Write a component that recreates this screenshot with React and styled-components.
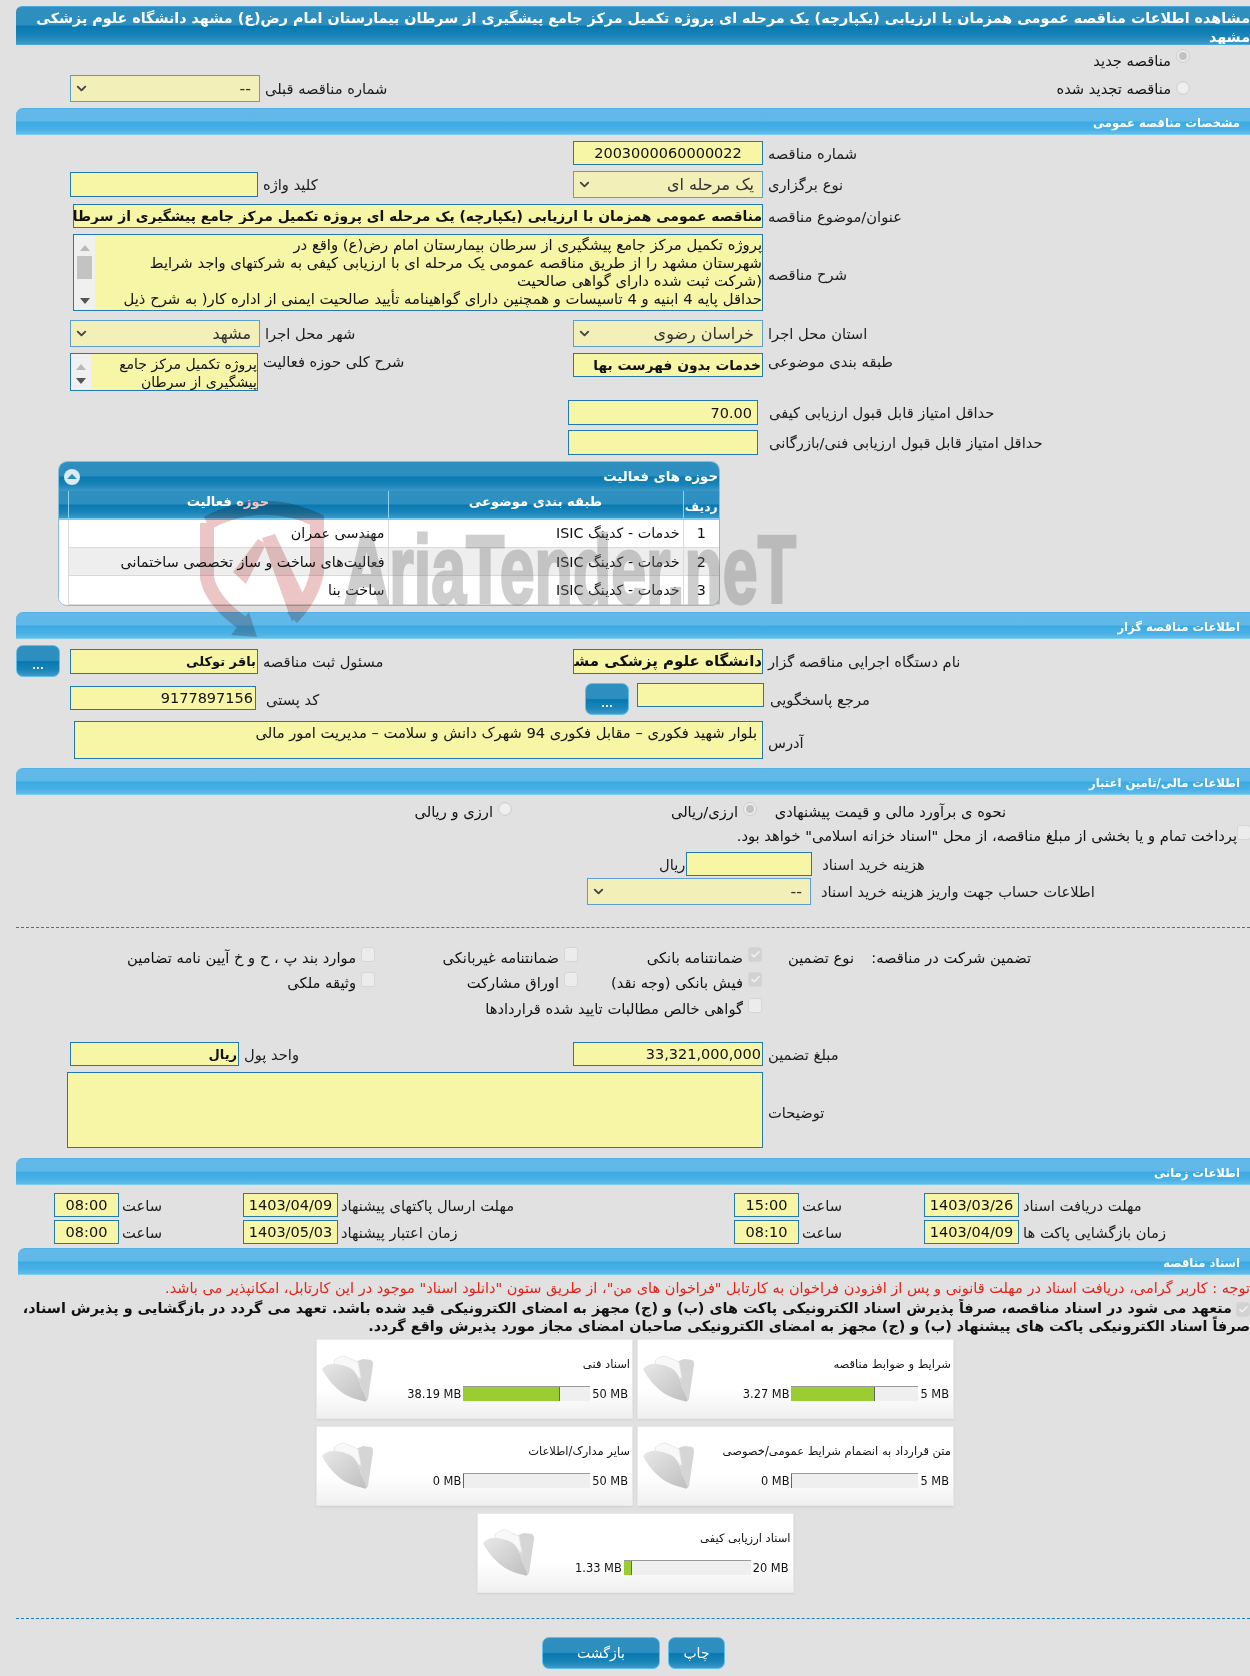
import React from 'react';
import styled, { createGlobalStyle } from 'styled-components';
import { Check, ChevronDown } from 'lucide-react';

const FONT = '"DejaVu Sans", "Liberation Sans", sans-serif';
const DARK_BAR = 'linear-gradient(#2f90c0 0%, #2d8fbf 48%, #0779b0 52%, #1b85b9 80%, #3e9ac8 100%)';
const LIGHT_BAR = 'linear-gradient(#62b9e9 0%, #60b8e8 48%, #3aaae3 52%, #4bb1e5 82%, #64bcea 100%)';

const GlobalStyle = createGlobalStyle`
  html, body { margin: 0; padding: 0; background: #e1e1e1; }
  * { box-sizing: border-box; }
`;

const Page = styled.div`
  position: relative;
  width: 1250px;
  height: 1676px;
  padding: 6px 0 0 16px;
  overflow: hidden;
  background: #e1e1e1;
  color: #111;
  font-family: ${FONT};
  font-size: 14.7px;
`;

const TitleBar = styled.div`
  height: 39px;
  padding-top: 2px;
  background: ${DARK_BAR};
  border-top: 1px solid #4aa8dc;
  border-bottom: 1px solid #4aa8dc;
  border-radius: 6px 0 0 0;
  color: #fff;
  font-weight: bold;
  font-size: 14.3px;
  line-height: 19px;
  text-align: right;
  white-space: nowrap;
  overflow: hidden;
`;

const SectionBar = styled.div`
  height: 27px;
  margin-top: ${(p) => p.$top}px;
  margin-left: ${(p) => p.$indent || 0}px;
  padding: 4px 10px 0 0;
  background: ${LIGHT_BAR};
  border-top: 1px solid #55b2e6;
  border-bottom: 1px solid #7ccdf2;
  border-radius: 7px 0 0 0;
  color: #fff;
  font-weight: bold;
  font-size: 11.6px;
  line-height: 20px;
  text-align: right;
`;

const Row = styled.div`
  display: flex;
  align-items: ${(p) => p.$align || 'center'};
  height: ${(p) => p.$h}px;
  margin-top: ${(p) => p.$top}px;
  padding-left: ${(p) => p.$left ?? 54}px;
`;

const Side = styled.div`
  display: flex;
  align-items: ${(p) => p.$align || 'center'};
  gap: ${(p) => p.$gap ?? 5}px;
  width: ${(p) => (p.$w ? `${p.$w}px` : 'auto')};
  flex-shrink: 0;
`;

const Label = styled.span`
  direction: rtl;
  white-space: nowrap;
  color: #1c1c1c;
  margin-top: ${(p) => p.$lift || 0}px;
`;

const Field = styled.input`
  width: ${(p) => p.$w}px;
  height: ${(p) => p.$h || 24}px;
  margin-top: ${(p) => p.$mt || 0}px;
  padding: 0 ${(p) => p.$pad ?? 1}px;
  flex-shrink: 0;
  background: #f7f5a6;
  border: 1px solid #2378ad;
  color: #111;
  font-family: ${FONT};
  font-size: ${(p) => p.$size || 14.5}px;
  font-weight: ${(p) => (p.$bold ? 'bold' : 'normal')};
  text-align: ${(p) => p.$align || 'right'};
  direction: rtl;
  outline: none;
`;

const SelectBox = styled.div`
  display: flex;
  align-items: center;
  justify-content: space-between;
  width: ${(p) => p.$w}px;
  height: 27px;
  padding: 0 8px 0 3px;
  flex-shrink: 0;
  background: #f2f0b8;
  border: 1px solid #5d9fca;
  color: #333;
  font-size: 16px;
  direction: ltr;
`;

const AreaBox = styled.div`
  display: flex;
  width: ${(p) => p.$w}px;
  height: ${(p) => p.$h}px;
  flex-shrink: 0;
  background: #f7f5a6;
  border: 1px solid #2378ad;
  overflow: hidden;
`;

const AreaText = styled.div`
  flex: 1;
  min-width: 0;
  padding: ${(p) => p.$pad || '1px 0 0'};
  font-size: ${(p) => p.$size || 14.8}px;
  line-height: 18px;
  text-align: right;
  direction: rtl;
  white-space: pre;
  overflow: hidden;
`;

const ScrollTrack = styled.div`
  position: relative;
  display: flex;
  flex-direction: column;
  align-items: center;
  justify-content: space-between;
  width: ${(p) => p.$w}px;
  padding: 10px 0 6px;
  flex-shrink: 0;
  background: #f0f0f0;
`;

const ArrowUp = styled.span`
  width: 0;
  height: 0;
  border: 5px solid transparent;
  border-top: 0;
  border-bottom: 6px solid #b9b9b9;
`;

const ArrowDown = styled.span`
  width: 0;
  height: 0;
  border: 5px solid transparent;
  border-bottom: 0;
  border-top: 6px solid #555;
`;

const Thumb = styled.span`
  position: absolute;
  top: 21px;
  left: 3px;
  right: 3px;
  height: 23px;
  background: #c3c3c3;
`;

const DotsButton = styled.button`
  width: 44px;
  height: 32px;
  padding: 8px 0 0;
  flex-shrink: 0;
  background: ${DARK_BAR};
  border: 1px solid #62c0ea;
  border-radius: 7px;
  color: #fff;
  font-family: ${FONT};
  font-size: 10px;
  font-weight: bold;
`;

const Panel = styled.div`
  width: 662px;
  height: 145px;
  margin: 6px 0 0 42px;
  background: #fff;
  border: 1px solid #88bde0;
  border-radius: 9px;
  overflow: hidden;
`;

const PanelHead = styled.div`
  display: flex;
  align-items: center;
  justify-content: space-between;
  height: 29px;
  padding: 0 1px 0 5px;
  background: ${DARK_BAR};
  color: #fff;
  font-weight: bold;
  font-size: 13.3px;
  direction: ltr;
`;

const Collapse = styled.span`
  display: flex;
  align-items: center;
  justify-content: center;
  width: 16px;
  height: 16px;
  border-radius: 50%;
  background: #dceaf3;
  &::before {
    content: '';
    border: 5px solid transparent;
    border-top: 0;
    border-bottom: 5px solid #2d8fbf;
  }
`;

const Grid = styled.table`
  width: 660px;
  table-layout: fixed;
  border-collapse: collapse;
  direction: rtl;
  font-size: 14.3px;
`;

const HeadCell = styled.th`
  width: ${(p) => p.$w}px;
  height: 28px;
  padding: ${(p) => (p.$low ? '4px 0 0' : '0 0 6px')};
  background: ${DARK_BAR};
  border-left: 1px solid #8ed0ee;
  border-bottom: 2px solid #7ccdf2;
  color: #fff;
  font-size: ${(p) => (p.$low ? 12.4 : 13.1)}px;
  white-space: nowrap;
  &:last-child { border-left: 0; }
`;

const BodyRow = styled.tr`
  background: ${(p) => (p.$alt ? '#eeeeee' : '#fff')};
`;

const BodyCell = styled.td`
  height: 28.4px;
  padding: 0 3px;
  border-left: 1px solid #d9d9d9;
  border-bottom: 1px solid #d9d9d9;
  text-align: ${(p) => (p.$center ? 'center' : 'right')};
  white-space: nowrap;
  &:last-child { border-left: 0; background: #fff; border-bottom: 0; }
`;

const OptionRow = styled.div`
  display: grid;
  grid-template-columns: ${(p) => p.$cols};
  align-items: center;
  height: ${(p) => p.$h || 22}px;
  margin-top: ${(p) => p.$top || 0}px;
  padding-top: ${(p) => p.$pt || 0}px;
  padding-right: ${(p) => p.$right}px;
  direction: rtl;
  white-space: nowrap;
`;

const Option = styled.label`
  display: inline-flex;
  align-items: center;
  gap: ${(p) => p.$gap ?? 5}px;
`;

const RadioDot = styled.span`
  display: inline-flex;
  align-items: center;
  justify-content: center;
  width: 14px;
  height: 14px;
  margin-top: ${(p) => p.$mt ?? -5}px;
  flex-shrink: 0;
  border-radius: 50%;
  background: #efefef;
  border: 1px solid #cfcfcf;
  box-shadow: inset 0 0 0 1px #e6e6e6;
  &::after {
    content: '';
    width: 8px;
    height: 8px;
    border-radius: 50%;
    background: ${(p) => (p.$on ? '#c2c2c2' : 'transparent')};
  }
`;

const Tick = styled.span`
  display: inline-flex;
  align-items: center;
  justify-content: center;
  width: 14px;
  height: 15px;
  margin-top: -6px;
  flex-shrink: 0;
  border-radius: 3px;
  background: ${(p) => (p.$on ? '#d2d2d2' : '#ececec')};
  border: 1px solid #d6d6d6;
  vertical-align: middle;
`;

const Dashed = styled.div`
  margin-top: ${(p) => p.$top}px;
  border-top: 1px dashed #1f7fb4;
`;

const Notice = styled.div`
  height: 20px;
  margin-top: 3px;
  color: #e2231a;
  font-size: 14.5px;
  line-height: 20px;
  text-align: right;
  direction: rtl;
  white-space: nowrap;
`;

const Pledge = styled.div`
  height: 36px;
  margin-top: 1px;
  color: #111;
  font-weight: bold;
  font-size: 14.35px;
  line-height: 18px;
  text-align: right;
  direction: rtl;
  white-space: nowrap;
  overflow: hidden;
`;

const Cards = styled.div`
  display: flex;
  flex-flow: row-reverse wrap;
  justify-content: center;
  gap: 7px 4px;
  width: 638px;
  margin: 4px 0 0 300px;
`;

const Card = styled.div`
  position: relative;
  display: flex;
  justify-content: space-between;
  width: 317px;
  height: 80px;
  padding: 15px 2px 0 4px;
  background: linear-gradient(#ffffff 0%, #ffffff 62%, #f0f0f0 100%);
  border: 1px solid #e9e9e9;
  box-shadow: 0 1px 2px #cfcfcf;
`;

const CardBody = styled.div`
  display: flex;
  flex-direction: column;
  align-items: flex-end;
  gap: 13px;
`;

const CardTitle = styled.div`
  direction: rtl;
  height: 18px;
  font-size: 11.5px;
  line-height: 18px;
  white-space: nowrap;
`;

const Usage = styled.div`
  display: flex;
  align-items: center;
  gap: 2px;
  font-size: 11.4px;
  padding-right: 2px;
`;

const Meter = styled.div`
  width: 127px;
  height: 15px;
  background: #efefef;
  border-top: 1px solid #9a9a9a;
`;

const MeterFill = styled.div`
  height: 14px;
  background: #9acd32;
  border-right: 1px solid #666;
`;

const Actions = styled.div`
  display: flex;
  gap: 8px;
  margin: 18px 0 0 526px;
`;

const ActionButton = styled.button`
  width: ${(p) => p.$w}px;
  height: 32px;
  background: ${DARK_BAR};
  border: 1px solid #62c0ea;
  border-radius: 7px;
  color: #fff;
  font-family: ${FONT};
  font-size: 14px;
`;

const Watermark = styled.svg`
  position: absolute;
  left: 190px;
  top: 490px;
  pointer-events: none;
`;

const FolderIcon = ({ id }) => (
  <svg width="54" height="50" viewBox="0 0 54 50">
    <defs>
      <linearGradient id={id} x1="0" y1="0" x2="1" y2="1">
        <stop offset="0" stopColor="#e8e8e8" />
        <stop offset="1" stopColor="#bfbfbf" />
      </linearGradient>
    </defs>
    <path d="M34 7 L42 4 L50 5 C52 6 52 8 52 10 L47 44 C46 46 45 46 44 46 L38 24 Z" fill="#d5d5d5" />
    <path d="M13 6 C15 3 19 1 23 1 L37 7 L40 24 L30 15 L14 10 Z" fill="#f8f8f8" stroke="#e4e4e4" strokeWidth="0.8" />
    <path d="M1 14 C4 10 10 8 15 9 C22 10 29 12 33 16 C37 21 39 26 40 32 L45 44 C46 47 44 47 42 46 C34 44 28 42 23 39 C14 33 6 24 1 14 Z" fill={`url(#${id})`} />
  </svg>
);

const Scroll = ({ w, thumb }) => (
  <ScrollTrack $w={w}>
    <ArrowUp />
    {thumb && <Thumb />}
    <ArrowDown />
  </ScrollTrack>
);

const Select = ({ w, text }) => (
  <SelectBox $w={w}>
    <ChevronDown size={15} strokeWidth={3} color="#444" />
    <span dir="rtl">{text}</span>
  </SelectBox>
);

const Radio = ({ on, mt, children }) => (
  <Option>
    <RadioDot $on={on} $mt={mt} />
    {children}
  </Option>
);

const Checkbox = ({ on, gap, children }) => (
  <Option $gap={gap}>
    <Tick $on={on}>{on && <Check size={11} strokeWidth={3} color="#f4f4f4" />}</Tick>
    {children}
  </Option>
);

const activities = [
  ['1', 'خدمات - کدینگ ISIC', 'مهندسی عمران'],
  ['2', 'خدمات - کدینگ ISIC', 'فعالیت‌های ساخت و ساز تخصصی ساختمانی'],
  ['3', 'خدمات - کدینگ ISIC', 'ساخت بنا'],
];

const documents = [
  { title: 'شرایط و ضوابط مناقصه', used: 3.27, max: 5 },
  { title: 'اسناد فنی', used: 38.19, max: 50 },
  { title: 'متن قرارداد به انضمام شرایط عمومی/خصوصی', used: 0, max: 5 },
  { title: 'سایر مدارک/اطلاعات', used: 0, max: 50 },
  { title: 'اسناد ارزیابی کیفی', used: 1.33, max: 20 },
];

const guarantees = [
  [
    { text: 'ضمانتنامه بانکی', on: true },
    { text: 'ضمانتنامه غیربانکی' },
    { text: 'موارد بند پ ، ح و خ آیین نامه تضامین' },
  ],
  [
    { text: 'فیش بانکی (وجه نقد)', on: true },
    { text: 'اوراق مشارکت' },
    { text: 'وثیقه ملکی' },
  ],
  [{ text: 'گواهی خالص مطالبات تایید شده قراردادها' }],
];

const GUARANTEE_GAPS = [17, 1, 2];

const dates = [
  ['مهلت دریافت اسناد', '1403/03/26', '15:00', 'مهلت ارسال پاکتهای پیشنهاد', '1403/04/09', '08:00'],
  ['زمان بازگشایی پاکت ها', '1403/04/09', '08:10', 'زمان اعتبار پیشنهاد', '1403/05/03', '08:00'],
];

const DateRow = ({ top, item }) => (
  <Row $h={24} $top={top} $left={38}>
    <Side $w={189} $gap={3}>
      <Field $w={65} $align="center" readOnly value={item[5]} />
      <Label>ساعت</Label>
    </Side>
    <Side $w={491} $gap={3}>
      <Field $w={95} $align="center" $pad={0} readOnly value={item[4]} />
      <Label>{item[3]}</Label>
    </Side>
    <Side $w={190} $gap={3}>
      <Field $w={65} $align="center" readOnly value={item[2]} />
      <Label>ساعت</Label>
    </Side>
    <Side $gap={4}>
      <Field $w={95} $align="center" $pad={0} readOnly value={item[1]} />
      <Label>{item[0]}</Label>
    </Side>
  </Row>
);

export default function App() {
  return (
    <Page>
      <GlobalStyle />
      <TitleBar dir="rtl">
        مشاهده اطلاعات مناقصه عمومی همزمان با ارزیابی (یکپارچه) یک مرحله ای پروژه تکمیل مرکز جامع پیشگیری از سرطان بیمارستان امام رض(ع) مشهد دانشگاه علوم پزشکی
        <br />
        مشهد
      </TitleBar>

      <OptionRow $h={28} $pt={3} $right={60} $cols="auto">
        <Radio on mt={-9}>مناقصه جدید</Radio>
      </OptionRow>
      <Row $h={27} $top={2}>
        <Side $w={980}>
          <Select w={190} text="--" />
          <Label>شماره مناقصه قبلی</Label>
        </Side>
        <OptionRow $right={60} $cols="auto" style={{ flex: 1 }}>
          <Radio mt={-1}>مناقصه تجدید شده</Radio>
        </OptionRow>
      </Row>

      <SectionBar $top={6}>مشخصات مناقصه عمومی</SectionBar>

      <Row $h={24} $top={6} $left={557}>
        <Side>
          <Field $w={190} $align="center" readOnly value="2003000060000022" />
          <Label>شماره مناقصه</Label>
        </Side>
      </Row>
      <Row $h={27} $top={6}>
        <Side $w={503}>
          <Field $w={188} $h={25} readOnly value="" />
          <Label>کلید واژه</Label>
        </Side>
        <Side>
          <Select w={190} text="یک مرحله ای" />
          <Label>نوع برگزاری</Label>
        </Side>
      </Row>
      <Row $h={24} $top={6} $left={57}>
        <Side>
          <Field $w={690} $bold $size={13.9} $pad={0} readOnly value="مناقصه عمومی همزمان با ارزیابی (یکپارچه) یک مرحله ای پروژه تکمیل مرکز جامع پیشگیری از سرطان بیمارستان امام رض(ع) مشهد دانشگاه علوم پزشکی مشهد" />
          <Label>عنوان/موضوع مناقصه</Label>
        </Side>
      </Row>
      <Row $h={77} $top={6} $left={57}>
        <Side>
          <AreaBox $w={690} $h={77}>
            <Scroll w={21} thumb />
            <AreaText>{'پروژه تکمیل مرکز جامع پیشگیری از سرطان بیمارستان امام رض(ع) واقع در\nشهرستان مشهد را از طریق مناقصه عمومی یک مرحله ای با ارزیابی کیفی به شرکتهای واجد شرایط\n(شرکت ثبت شده دارای گواهی صالحیت\nحداقل پایه 4 ابنیه و 4 تاسیسات و همچنین دارای گواهینامه تأیید صالحیت ایمنی از اداره کار( به شرح ذیل'}</AreaText>
          </AreaBox>
          <Label $lift={4}>شرح مناقصه</Label>
        </Side>
      </Row>
      <Row $h={27} $top={9}>
        <Side $w={503}>
          <Select w={190} text="مشهد" />
          <Label>شهر محل اجرا</Label>
        </Side>
        <Side>
          <Select w={190} text="خراسان رضوی" />
          <Label>استان محل اجرا</Label>
        </Side>
      </Row>
      <Row $h={38} $top={6} $align="flex-start">
        <Side $w={503} $align="flex-start">
          <AreaBox $w={188} $h={38}>
            <Scroll w={20} />
            <AreaText $size={14}>{'پروژه تکمیل مرکز جامع\nپیشگیری از سرطان'}</AreaText>
          </AreaBox>
          <Label>شرح کلی حوزه فعالیت</Label>
        </Side>
        <Side $align="flex-start">
          <Field $w={190} $bold $size={13.8} readOnly value="خدمات بدون فهرست بها" />
          <Label>طبقه بندی موضوعی</Label>
        </Side>
      </Row>
      <Row $h={25} $top={9} $left={552}>
        <Side $gap={11}>
          <Field $w={190} $h={25} $pad={5} readOnly value="70.00" />
          <Label>حداقل امتیاز قابل قبول ارزیابی کیفی</Label>
        </Side>
      </Row>
      <Row $h={25} $top={5} $left={552}>
        <Side $gap={11}>
          <Field $w={190} $h={25} readOnly value="" />
          <Label>حداقل امتیاز قابل قبول ارزیابی فنی/بازرگانی</Label>
        </Side>
      </Row>

      <Panel>
        <PanelHead>
          <Collapse />
          <span dir="rtl">حوزه های فعالیت</span>
        </PanelHead>
        <Grid>
          <thead>
            <tr>
              <HeadCell $w={36} $low>ردیف</HeadCell>
              <HeadCell $w={295}>طبقه بندی موضوعی</HeadCell>
              <HeadCell $w={320}>حوزه فعالیت</HeadCell>
              <HeadCell $w={9} />
            </tr>
          </thead>
          <tbody>
            {activities.map((row, i) => (
              <BodyRow key={row[0]} $alt={i === 1}>
                <BodyCell $center>{row[0]}</BodyCell>
                <BodyCell>{row[1]}</BodyCell>
                <BodyCell>{row[2]}</BodyCell>
                <BodyCell />
              </BodyRow>
            ))}
          </tbody>
        </Grid>
      </Panel>

      <SectionBar $top={6}>اطلاعات مناقصه گزار</SectionBar>

      <Row $h={32} $top={6} $left={0}>
        <Side $w={557} $gap={5}>
          <DotsButton>...</DotsButton>
          <Field $w={188} $h={25} $bold $size={13} readOnly value="باقر توکلی" style={{ marginLeft: 5 }} />
          <Label>مسئول ثبت مناقصه</Label>
        </Side>
        <Side>
          <Field $w={190} $h={25} $bold $size={15} $pad={0} readOnly value="دانشگاه علوم پزشکی مشهد" />
          <Label>نام دستگاه اجرایی مناقصه گزار</Label>
        </Side>
      </Row>
      <Row $h={32} $top={6} $align="flex-start">
        <Side $w={515} $align="flex-start" $gap={10}>
          <Field $w={186} $mt={3} $pad={2} readOnly value="9177897156" />
          <Label $lift={8}>کد پستی</Label>
        </Side>
        <Side $align="flex-start" $gap={8}>
          <DotsButton>...</DotsButton>
          <Side $align="flex-start" $gap={6}>
            <Field $w={127} readOnly value="" />
            <Label $lift={8}>مرجع پاسخگویی</Label>
          </Side>
        </Side>
      </Row>
      <Row $h={38} $top={6} $left={58}>
        <Side>
          <AreaBox $w={689} $h={38}>
            <AreaText $size={14.7} $pad="2px 5px 0 0">بلوار شهید فکوری – مقابل فکوری 94 شهرک دانش و سلامت – مدیریت امور مالی</AreaText>
          </AreaBox>
          <Label $lift={4}>آدرس</Label>
        </Side>
      </Row>

      <SectionBar $top={9}>اطلاعات مالی/تامین اعتبار</SectionBar>

      <OptionRow $top={5} $right={244} $cols="249px 245px auto">
        <span>نحوه ی برآورد مالی و قیمت پیشنهادی</span>
        <Radio on>ارزی/ریالی</Radio>
        <Radio>ارزی و ریالی</Radio>
      </OptionRow>
      <OptionRow $top={2} $right={0} $cols="auto" style={{ marginRight: -1 }}>
        <Checkbox gap={0}>پرداخت تمام و یا بخشی از مبلغ مناقصه، از محل "اسناد خزانه اسلامی" خواهد بود.</Checkbox>
      </OptionRow>
      <Row $h={24} $top={6} $left={643}>
        <Side $gap={1}>
          <Label>ریال</Label>
          <Field $w={126} readOnly value="" />
          <Label style={{ marginLeft: 9 }}>هزینه خرید اسناد</Label>
        </Side>
      </Row>
      <Row $h={27} $top={2} $left={571}>
        <Side $gap={10}>
          <Select w={224} text="--" />
          <Label>اطلاعات حساب جهت واریز هزینه خرید اسناد</Label>
        </Side>
      </Row>

      <Dashed $top={22} />

      {guarantees.map((row, i) => (
        <OptionRow key={i} $h={24} $top={GUARANTEE_GAPS[i]} $right={219} $cols="177px 92px 184px 203px auto">
          <span>{i === 0 && 'تضمین شرکت در مناقصه:'}</span>
          <span>{i === 0 && 'نوع تضمین'}</span>
          {row.map((item) => (
            <Checkbox key={item.text} on={item.on}>{item.text}</Checkbox>
          ))}
        </OptionRow>
      ))}

      <Row $h={24} $top={22}>
        <Side $w={503}>
          <Field $w={169} readOnly value="ریال" $bold $size={13} />
          <Label>واحد پول</Label>
        </Side>
        <Side>
          <Field $w={190} readOnly value="33,321,000,000" />
          <Label>مبلغ تضمین</Label>
        </Side>
      </Row>
      <Row $h={76} $top={6} $left={51}>
        <Side>
          <AreaBox $w={696} $h={76} />
          <Label $lift={4}>توضیحات</Label>
        </Side>
      </Row>

      <SectionBar $top={10}>اطلاعات زمانی</SectionBar>

      <DateRow top={8} item={dates[0]} />
      <DateRow top={3} item={dates[1]} />

      <SectionBar $top={4} $indent={2}>اسناد مناقصه</SectionBar>

      <Notice>توجه : کاربر گرامی، دریافت اسناد در مهلت قانونی و پس از افزودن فراخوان به کارتابل "فراخوان های من"، از طریق ستون "دانلود اسناد" موجود در این کارتابل، امکانپذیر می باشد.</Notice>
      <Pledge>
        <Tick $on style={{ margin: '0 0 0 4px' }}><Check size={11} strokeWidth={3} color="#f4f4f4" /></Tick>
        متعهد می شود در اسناد مناقصه، صرفاً پذیرش اسناد الکترونیکی پاکت های (ب) و (ج) مجهز به امضای الکترونیکی قید شده باشد. تعهد می گردد در بازگشایی و پذیرش اسناد،
        <br />
        صرفاً اسناد الکترونیکی پاکت های پیشنهاد (ب) و (ج) مجهز به امضای الکترونیکی صاحبان امضای مجاز مورد پذیرش واقع گردد.
      </Pledge>

      <Cards>
        {documents.map((doc, i) => (
          <Card key={doc.title}>
            <FolderIcon id={`pouch${i}`} />
            <CardBody>
              <CardTitle>{doc.title}</CardTitle>
              <Usage>
                <span>{doc.used} MB</span>
                <Meter>
                  <MeterFill style={{ width: `${(doc.used / doc.max) * 100}%` }} />
                </Meter>
                <span>{doc.max} MB</span>
              </Usage>
            </CardBody>
          </Card>
        ))}
      </Cards>

      <Dashed $top={25} />

      <Actions>
        <ActionButton $w={118}>بازگشت</ActionButton>
        <ActionButton $w={57}>چاپ</ActionButton>
      </Actions>

      <Watermark width="640" height="160" viewBox="190 490 640 160">
        <g style={{ mixBlendMode: 'multiply' }}>
          <path d="M207 523 Q262 494 317 520 L317 572 Q312 598 292 618" fill="none" stroke="#ecc6c6" strokeWidth="14" />
          <path d="M207 523 L207 578 Q212 602 244 624" fill="none" stroke="#ecc6c6" strokeWidth="14" />
          <path d="M231 635 L249 612 L257 637 Z" fill="#ecc6c6" />
          <path d="M233 572 L258 539 L266 544 L246 584 Z" fill="#ecc6c6" />
          <path d="M262 538 L275 534 L304 596 L292 622 Z" fill="#ecc6c6" />
        </g>
        <g opacity="0.33">
          <text
            x="344"
            y="603"
            fontFamily="Liberation Sans"
            fontWeight="bold"
            fontSize="96"
            fill="#6e6e6e"
            stroke="#6e6e6e"
            strokeWidth="3"
            textLength="452"
            lengthAdjust="spacingAndGlyphs"
          >
            AriaTender.neT
          </text>
        </g>
      </Watermark>
    </Page>
  );
}
